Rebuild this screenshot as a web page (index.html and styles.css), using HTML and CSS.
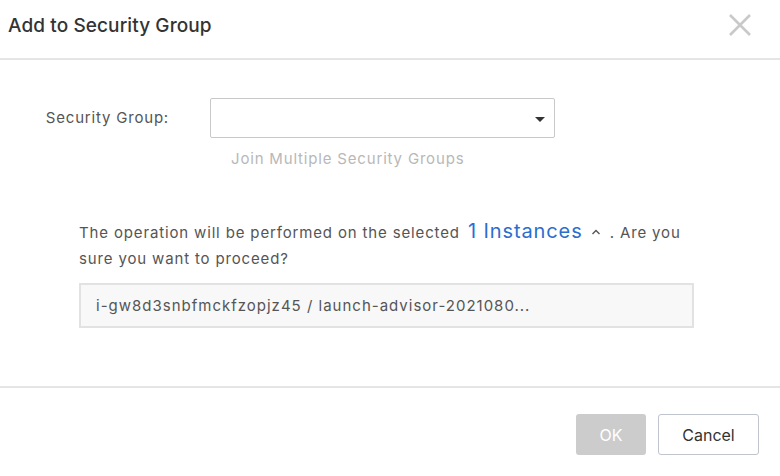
FILE: index.html
```html
<!DOCTYPE html>
<html>
<head>
<meta charset="utf-8">
<link rel="stylesheet" href="styles.css">
</head>
<body>
<div class="dialog">
  <div class="header">
    <div class="title">Add to Security Group</div>
    <div class="close">
      <svg width="24" height="24" viewBox="0 0 24 24"><path d="M2 2 L22 22 M22 2 L2 22" stroke="#c9c9c9" stroke-width="2.6" fill="none"/></svg>
    </div>
  </div>
  <div class="body">
    <div class="form-row">
      <div class="label">Security Group:</div>
      <div class="field">
        <div class="select"><span class="caret"></span></div>
        <div class="help">Join Multiple Security Groups</div>
      </div>
    </div>
    <div class="notice">
      <p class="msg">The operation will be performed on the selected <span class="link">1 Instances</span> <span class="up"><svg width="10" height="8" viewBox="0 0 10 8"><path d="M1.5 6 L5 2.5 L8.5 6" stroke="#555" stroke-width="1.4" fill="none"/></svg></span> . Are you sure you want to proceed?</p>
      <div class="instances">i-gw8d3snbfmckfzopjz45 / launch-advisor-2021080...</div>
    </div>
  </div>
  <div class="footer">
    <button class="btn ok">OK</button>
    <button class="btn cancel">Cancel</button>
  </div>
</div>
</body>
</html>
```
FILE: styles.css
```css
* { box-sizing: border-box; }
html, body { margin: 0; padding: 0; background: #fff; }
body { font-family: Inter, "Helvetica Neue", Arial, sans-serif; width: 780px; height: 476px; overflow: hidden; }
.dialog { width: 780px; height: 476px; display: flex; flex-direction: column; }
.header { height: 60px; border-bottom: 2px solid #e5e5e5; display: flex; align-items: center; justify-content: space-between; padding: 0 28px 8px 8px; }
.title { font-size: 19px; font-weight: 500; color: #333; letter-spacing: 0.1px; }
.close { width: 24px; height: 24px; display: flex; }
.body { height: 328px; border-bottom: 2px solid #e5e5e5; padding-top: 38px; }
.form-row { display: flex; }
.label { width: 169px; text-align: right; font-size: 15px; letter-spacing: 0.8px; color: #555; padding-top: 10px; white-space: nowrap; }
.field { margin-left: 41px; }
.select { width: 345px; height: 40px; border: 1px solid #c8c8c8; border-radius: 2px; position: relative; }
.caret { position: absolute; right: 9px; top: 18px; width: 0; height: 0; border-left: 5px solid transparent; border-right: 5px solid transparent; border-top: 5px solid #333; }
.help { font-size: 15px; letter-spacing: 0.82px; color: #b8b8b8; margin-top: 11px; margin-left: 21px; }
.notice { padding: 50px 0 0 79px; }
.msg { margin: 0; width: 615px; font-size: 15px; letter-spacing: 0.85px; color: #555; line-height: 26px; }
.link { font-size: 20px; line-height: 20px; letter-spacing: 0.9px; color: #2a6ecf; margin-left: 3px; }
.up { display: inline-block; vertical-align: 2px; margin: 0 4px 0 3px; }
.instances { margin-top: 11px; width: 615px; height: 45px; background: #f8f8f8; border: 2px solid #e2e2e2; font-size: 15px; letter-spacing: 1px; color: #555; padding: 0 0 0 15px; display: flex; align-items: center; white-space: nowrap; }
.footer { display: flex; justify-content: flex-end; gap: 12px; padding: 26px 21px 0 0; }
.btn { font-family: inherit; font-size: 16px; height: 41px; border-radius: 3px; cursor: pointer; }
.ok { width: 70px; background: #cccccc; color: #fff; border: none; }
.cancel { width: 101px; background: #fff; color: #333; border: 1px solid #c0c4cc; }
```
